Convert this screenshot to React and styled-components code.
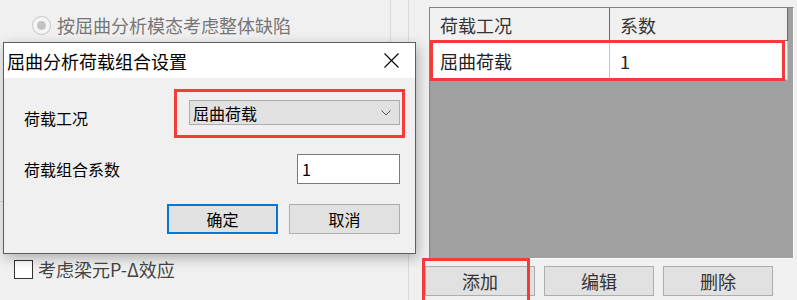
import styled, { createGlobalStyle } from "styled-components";

const GlobalStyle = createGlobalStyle`
  html, body {
    margin: 0;
    padding: 0;
    background: #f0f0f0;
  }
  body {
    font-family: "Noto Sans CJK SC", "Noto Sans", sans-serif;
  }
`;

const Screen = styled.div`
  position: relative;
  width: 797px;
  height: 300px;
  overflow: hidden;
  display: flex;
  background: #f0f0f0;
`;

const LeftPane = styled.div`
  width: 409px;
  box-sizing: border-box;
  border-right: 1px solid #dadada;
  display: flex;
  flex-direction: column;
`;

const GroupBox = styled.div`
  width: 391px;
  height: 202px;
  box-sizing: border-box;
  border-right: 1px solid #dadada;
  border-bottom: 1px solid #dadada;
  padding: 16px 0 0 32px;
`;

const RadioRow = styled.div`
  display: flex;
  align-items: center;
  gap: 6px;
  font-size: 18px;
  line-height: 19px;
  color: #767676;
`;

const Radio = styled.span`
  width: 19px;
  height: 19px;
  box-sizing: border-box;
  border-radius: 50%;
  border: 1px solid #c6c6c6;
  background: #f5f5f5;
  display: flex;
  align-items: center;
  justify-content: center;

  &::after {
    content: "";
    width: 9px;
    height: 9px;
    border-radius: 50%;
    background: #c4c4c4;
  }
`;

const CheckRow = styled.div`
  margin-top: auto;
  padding: 0 0 21px 14px;
  display: flex;
  align-items: center;
  gap: 5px;
  font-size: 18px;
  line-height: 19px;
  color: #444;
`;

const CheckBox = styled.span`
  width: 19px;
  height: 19px;
  box-sizing: border-box;
  border: 1px solid #333;
  background: #fff;
`;

const RightPane = styled.div`
  flex: 1;
  display: flex;
  flex-direction: column;
  padding: 7px 3px 0 16px;
`;

const Grid = styled.div`
  margin-left: 4px;
  height: 252px;
  box-sizing: border-box;
  background: #a0a0a0;
  border-top: 1px solid #828282;
  border-left: 1px solid #828282;
  border-right: 1px solid #fafafa;
  border-bottom: 1px solid #fafafa;
`;

const Row = styled.div`
  display: grid;
  grid-template-columns: 180px 178px;
  height: ${(p) => (p.$head ? 33 : 39)}px;
`;

const Cell = styled.div`
  box-sizing: border-box;
  display: flex;
  align-items: center;
  padding: 2px 0 0 10px;
  font-size: 18px;
  color: ${(p) => (p.$head ? "#333" : "#222")};
  background: ${(p) => (p.$head ? "#f0f0f0" : "#fff")};
  border-right: 1px solid ${(p) => (p.$head ? "#6c6c6c" : "#c4c4c4")};
  border-bottom: 1px solid ${(p) => (p.$head ? "#6c6c6c" : "#c4c4c4")};
`;

const ButtonRow = styled.div`
  display: flex;
  gap: 9px;
  margin-top: 7px;
`;

const Button = styled.button`
  width: ${(p) => p.$w || 110}px;
  height: 30px;
  box-sizing: border-box;
  background: #e1e1e1;
  border: ${(p) => (p.$primary ? "2px solid #0078d7" : "1px solid #adadad")};
  font-family: inherit;
  font-size: ${(p) => p.$fs || 18}px;
  color: ${(p) => (p.$fs ? "#000" : "#333")};
  padding: 0;
  line-height: 1;
`;

const Dialog = styled.div`
  position: absolute;
  left: 3px;
  top: 42px;
  width: 413px;
  height: 212px;
  box-sizing: border-box;
  border: 1px solid #5e5e5e;
  background: #f0f0f0;
  box-shadow: 2px 4px 12px rgba(0, 0, 0, 0.28);
`;

const TitleBar = styled.div`
  height: 35px;
  background: #fff;
  display: flex;
  align-items: center;
  justify-content: space-between;
  padding: 0 16px 0 3px;
`;

const Title = styled.span`
  font-size: 18px;
  color: #000;
`;

const Body = styled.div`
  padding: 22px 15px 0 20px;
`;

const FieldRow = styled.div`
  display: flex;
  justify-content: space-between;
  align-items: ${(p) => (p.$top ? "flex-start" : "center")};
  margin-top: ${(p) => p.$gap || 0}px;
`;

const Label = styled.span`
  font-size: 16px;
  line-height: 24px;
  color: #000;
  padding-top: ${(p) => p.$drop || 0}px;
`;

const Select = styled.div`
  width: 211px;
  height: 25px;
  box-sizing: border-box;
  background: #e1e1e1;
  border: 1px solid #adadad;
  display: flex;
  align-items: center;
  justify-content: space-between;
  padding: 0 8px 0 3px;
  font-size: 16px;
  color: #000;
`;

const Input = styled.div`
  width: 103px;
  height: 30px;
  box-sizing: border-box;
  background: #fff;
  border: 1px solid #7a7a7a;
  display: flex;
  align-items: center;
  padding-left: 4px;
  font-size: 16px;
  color: #000;
`;

const Actions = styled.div`
  display: flex;
  justify-content: flex-end;
  gap: 11px;
  margin-top: 20px;
`;

const Mark = styled.div`
  position: absolute;
  left: ${(p) => p.$x}px;
  top: ${(p) => p.$y}px;
  width: ${(p) => p.$w}px;
  height: ${(p) => p.$h}px;
  box-sizing: border-box;
  border: 3px solid #f33b3b;
  pointer-events: none;
`;

const Close = () => (
  <svg width="15" height="15" viewBox="0 0 15 15">
    <path d="M0.5 0.5 L14.5 14.5 M14.5 0.5 L0.5 14.5" stroke="#000" strokeWidth="1.1" />
  </svg>
);

const Chevron = () => (
  <svg width="10" height="6" viewBox="0 0 10 6">
    <path d="M0.5 0.5 L5 5 L9.5 0.5" fill="none" stroke="#555" strokeWidth="1" />
  </svg>
);

export default function App() {
  return (
    <>
      <GlobalStyle />
      <Screen>
        <LeftPane>
          <GroupBox>
            <RadioRow>
              <Radio />
              按屈曲分析模态考虑整体缺陷
            </RadioRow>
          </GroupBox>
          <CheckRow>
            <CheckBox />
            考虑梁元P-Δ效应
          </CheckRow>
        </LeftPane>

        <RightPane>
          <Grid>
            <Row $head>
              <Cell $head>荷载工况</Cell>
              <Cell $head>系数</Cell>
            </Row>
            <Row>
              <Cell>屈曲荷载</Cell>
              <Cell>1</Cell>
            </Row>
          </Grid>
          <ButtonRow>
            <Button>添加</Button>
            <Button>编辑</Button>
            <Button>删除</Button>
          </ButtonRow>
        </RightPane>

        <Dialog>
          <TitleBar>
            <Title>屈曲分析荷载组合设置</Title>
            <Close />
          </TitleBar>
          <Body>
            <FieldRow $top>
              <Label $drop={6}>荷载工况</Label>
              <Select>
                屈曲荷载
                <Chevron />
              </Select>
            </FieldRow>
            <FieldRow $gap={24}>
              <Label>荷载组合系数</Label>
              <Input>1</Input>
            </FieldRow>
            <Actions>
              <Button $primary $w={111} $fs={16}>确定</Button>
              <Button $w={111} $fs={16}>取消</Button>
            </Actions>
          </Body>
        </Dialog>

        <Mark $x={174} $y={89} $w={231} $h={49} />
        <Mark $x={430} $y={40} $w={355} $h={41} />
        <Mark $x={422} $y={258} $w={108} $h={46} />
      </Screen>
    </>
  );
}
